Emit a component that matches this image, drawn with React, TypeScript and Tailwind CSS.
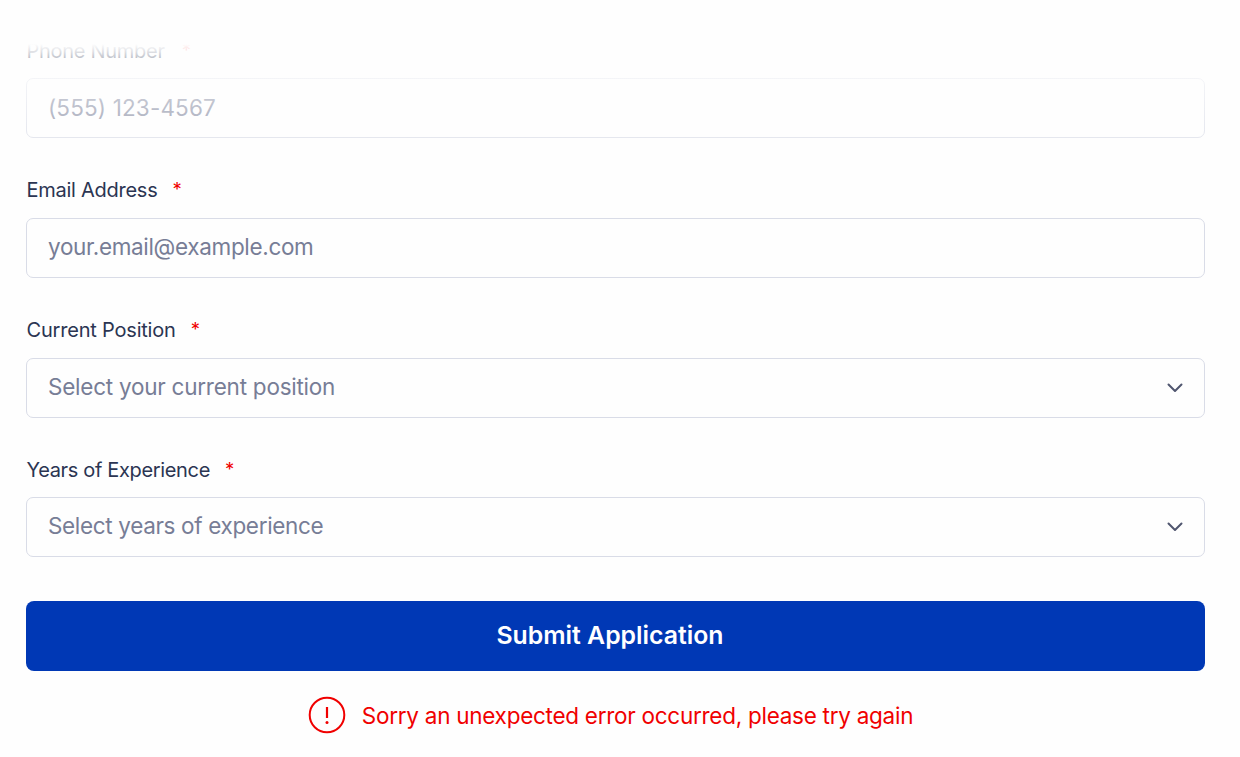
import type { ReactNode } from 'react';

function Field({ label, labelClass, className, children }: { label: string; labelClass: string; className: string; children: ReactNode }) {
  return (
    <div className={className}>
      <label className="flex h-7 items-center pl-[0.5px] text-[20px] text-[#2b3552]">
        <span className={`whitespace-nowrap ${labelClass}`}>{label}</span>
        <span className="ml-[15px] text-[18.5px] text-[#f00000]">*</span>
      </label>
      {children}
    </div>
  );
}

const boxClass =
  'block h-[60px] w-full rounded-[7px] border-[1.5px] border-[#d9dce7] bg-[#fefefe] px-[21px] text-left text-[22.5px] text-[#777d96] placeholder:text-[#777d96] placeholder:opacity-100 outline-none';

function Select({ text, textClass, className }: { text: string; textClass: string; className: string }) {
  return (
    <button type="button" className={`${boxClass} pb-[2px] ${className}`}>
      <span className="flex items-center justify-between">
        <span className={`whitespace-nowrap ${textClass}`}>{text}</span>
        <svg className="mt-0.5" width="16" height="10" viewBox="0 0 16 10" fill="none" stroke="#50566f" strokeWidth="2" strokeLinecap="round" strokeLinejoin="round">
          <path d="M1.5 1.5 8 8l6.5-6.5" />
        </svg>
      </span>
    </button>
  );
}

export default function App() {
  return (
    <div className="relative h-[757px] w-full overflow-hidden bg-[#fefefe] pt-[37px] pr-[35px] pl-[26px] font-['Inter',sans-serif]">
      <form onSubmit={(e) => e.preventDefault()}>
        <Field label="Phone Number" labelClass="pr-[2px] tracking-[-0.28px]" className="mb-[38px]">
          <input className={`${boxClass} mt-[13px] pb-[2px] tracking-[0.15px]`} placeholder="(555) 123-4567" />
        </Field>
        <Field label="Email Address" labelClass="tracking-[-0.26px]" className="mb-[38px]">
          <input className={`${boxClass} mt-3.5 pb-[4px] tracking-[-0.33px]`} placeholder="your.email@example.com" />
        </Field>
        <Field label="Current Position" labelClass="tracking-[-0.2px]" className="mb-[38px]">
          <Select text="Select your current position" textClass="tracking-[-0.24px]" className="mt-3.5" />
        </Field>
        <Field label="Years of Experience" labelClass="tracking-[-0.34px]" className="mb-[44px]">
          <Select text="Select years of experience" textClass="tracking-[-0.34px]" className="mt-[13px]" />
        </Field>

        <button type="submit" className="flex h-[70px] w-full items-center justify-center rounded-[8px] bg-[#0038b5] pr-[11px] text-[24.8px] font-semibold text-white">
          Submit Application
        </button>

        <div className="mt-[25px] flex items-center justify-center pr-[10px] text-[22.5px] text-[#f00000]">
          <svg className="mr-[16px]" width="38" height="38" viewBox="0 0 38 38" fill="none" stroke="currentColor" strokeWidth="2">
            <circle cx="19" cy="19" r="17.3" />
            <path d="M19 11v11" strokeWidth="2.2" />
            <circle cx="19" cy="26.4" r="1.5" fill="currentColor" stroke="none" />
          </svg>
          <span className="pt-[2px] whitespace-nowrap tracking-[-0.27px]">Sorry an unexpected error occurred, please try again</span>
        </div>
      </form>

      {/* scroll fade */}
      <div className="pointer-events-none absolute inset-x-0 top-0 h-[175px] bg-[linear-gradient(to_bottom,#fefefe_44px,#fefefed8_52px,#fefefea8_60px,#fefefeb8_78px,#fefefe80_110px,#fefefe50_138px,#fefefe00_175px)]" />
    </div>
  );
}
